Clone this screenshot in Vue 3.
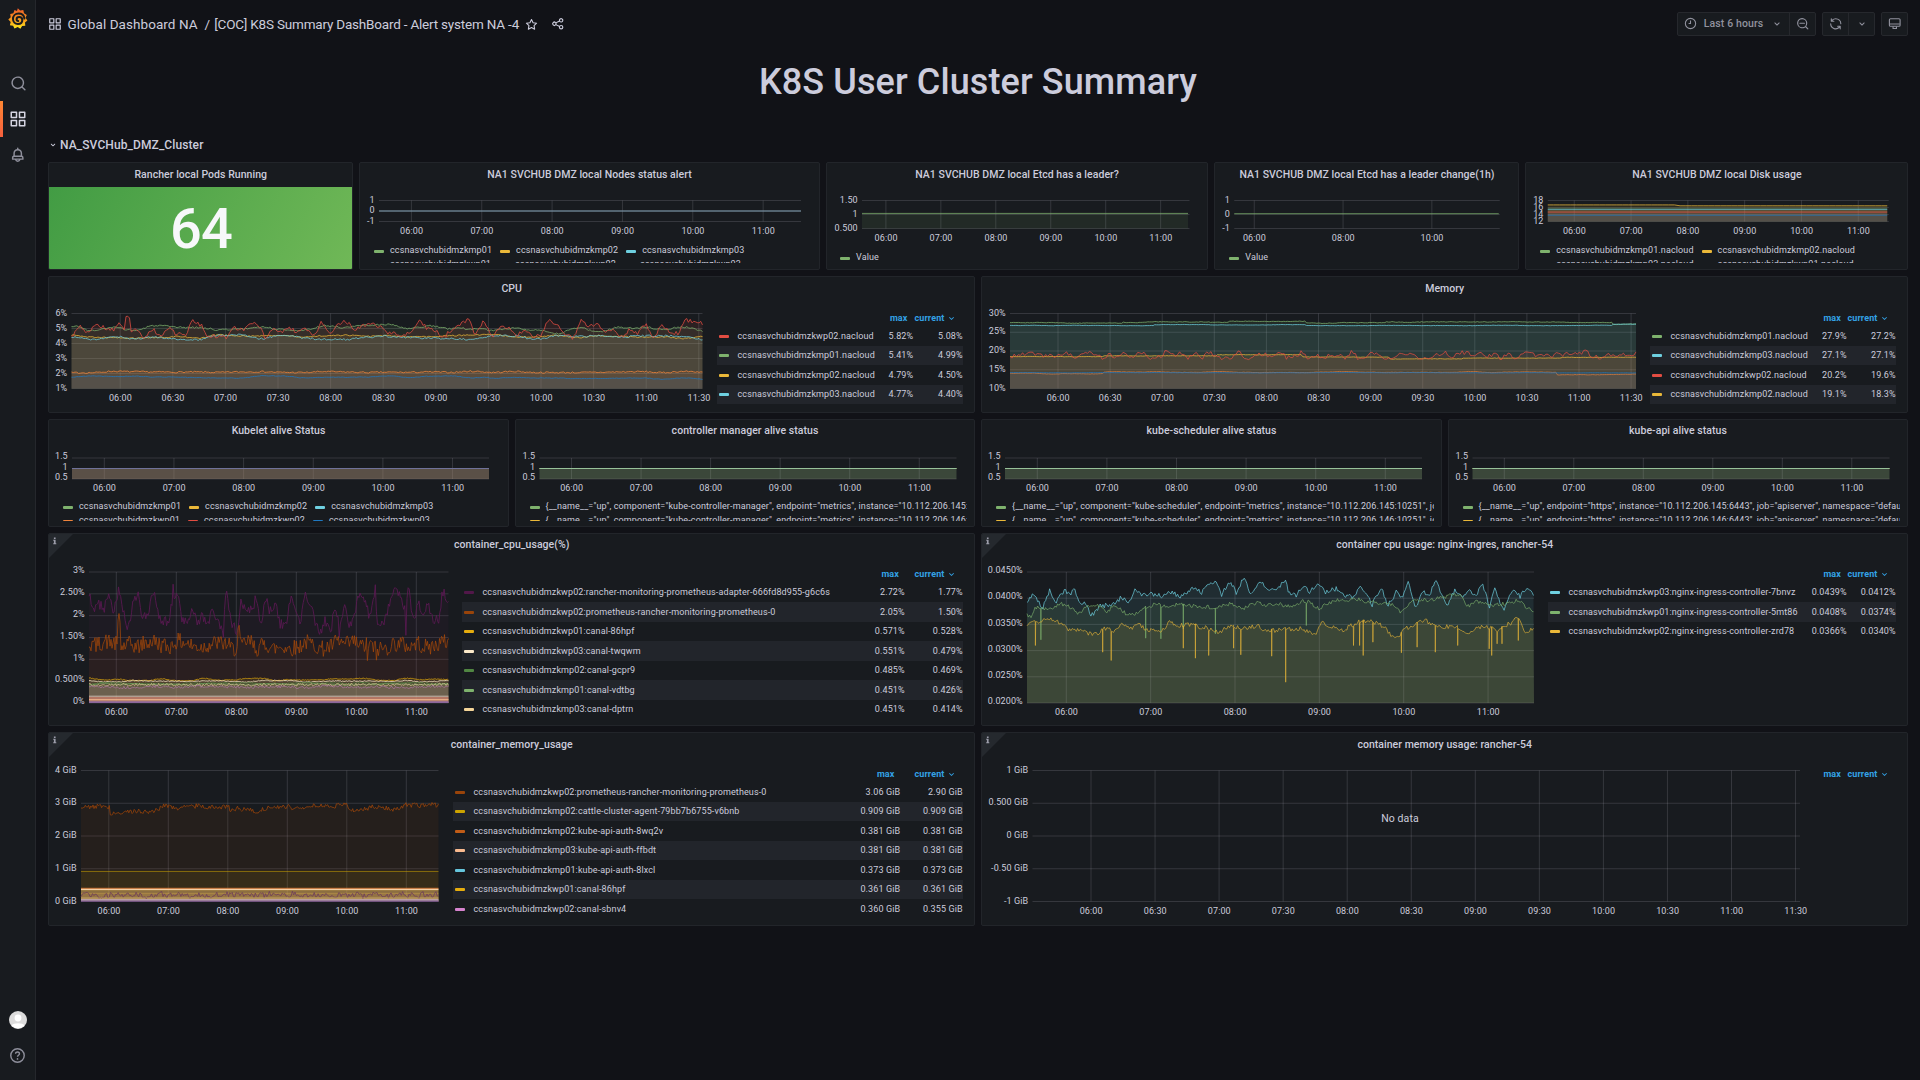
<script setup>
const GREEN = '#7EB26D', YELLOW = '#EAB839', CYAN = '#6ED0E0', ORANGE = '#EF843C', RED = '#E24D42', BLUE = '#1F78C1'

const icons = {
  apps: 'M10,13H3a1,1,0,0,0-1,1v7a1,1,0,0,0,1,1h7a1,1,0,0,0,1-1V14A1,1,0,0,0,10,13ZM9,20H4V15H9ZM21,2H14a1,1,0,0,0-1,1v7a1,1,0,0,0,1,1h7a1,1,0,0,0,1-1V3A1,1,0,0,0,21,2ZM20,9H15V4h5Zm1,4H14a1,1,0,0,0-1,1v7a1,1,0,0,0,1,1h7a1,1,0,0,0,1-1V14A1,1,0,0,0,21,13Zm-1,7H15V15h5ZM10,2H3A1,1,0,0,0,2,3v7a1,1,0,0,0,1,1h7a1,1,0,0,0,1-1V3A1,1,0,0,0,10,2ZM9,9H4V4H9Z',
  search: 'M21.71,20.29,18,16.61A9,9,0,1,0,16.61,18l3.68,3.68a1,1,0,0,0,1.42,0A1,1,0,0,0,21.71,20.29ZM11,18a7,7,0,1,1,7-7A7,7,0,0,1,11,18Z',
  minus: 'M21.71,20.29,18,16.61A9,9,0,1,0,16.61,18l3.68,3.68a1,1,0,0,0,1.42,0A1,1,0,0,0,21.71,20.29ZM11,18a7,7,0,1,1,7-7A7,7,0,0,1,11,18ZM15,10H7a1,1,0,0,0,0,2h8a1,1,0,0,0,0-2Z',
  bell: 'M18,13.18V10a6,6,0,0,0-5-5.91V3a1,1,0,0,0-2,0V4.09A6,6,0,0,0,6,10v3.18A3,3,0,0,0,4,16v2a1,1,0,0,0,1,1H8.14a4,4,0,0,0,7.72,0H19a1,1,0,0,0,1-1V16A3,3,0,0,0,18,13.18ZM8,10a4,4,0,0,1,8,0v3H8Zm4,10a2,2,0,0,1-1.72-1h3.44A2,2,0,0,1,12,20Zm6-3H6V16a1,1,0,0,1,1-1H17a1,1,0,0,1,1,1Z',
  down: 'M17,9.17a1,1,0,0,0-1.41,0L12,12.71,8.46,9.17a1,1,0,0,0-1.41,0,1,1,0,0,0,0,1.42l4.24,4.24a1,1,0,0,0,1.42,0L17,10.59A1,1,0,0,0,17,9.17Z',
  share: 'M18,14a4,4,0,0,0-3.08,1.48l-5.1-2.35a3.64,3.64,0,0,0,0-2.26l5.1-2.35A4,4,0,1,0,14,6a4.17,4.17,0,0,0,.07.71L8.79,9.14a4,4,0,1,0,0,5.72l5.28,2.43A4.17,4.17,0,0,0,14,18a4,4,0,1,0,4-4ZM18,4a2,2,0,1,1-2,2A2,2,0,0,1,18,4ZM6,14a2,2,0,1,1,2-2A2,2,0,0,1,6,14Zm12,6a2,2,0,1,1,2-2A2,2,0,0,1,18,20Z',
  sync: 'M19.91,15.51H15.38a1,1,0,0,0,0,2h2.4A8,8,0,0,1,4,12a1,1,0,0,0-2,0,10,10,0,0,0,16.88,7.23V21a1,1,0,0,0,2,0V16.5A1,1,0,0,0,19.91,15.51ZM12,2A10,10,0,0,0,5.12,4.77V3a1,1,0,0,0-2,0V7.5a1,1,0,0,0,1,1h4.5a1,1,0,0,0,0-2H6.22A8,8,0,0,1,20,12a1,1,0,0,0,2,0A10,10,0,0,0,12,2Z',
}

function rng(seed) {
  let a = seed
  return () => {
    a = (a + 0x6d2b79f5) | 0
    let t = Math.imul(a ^ (a >>> 15), 1 | a)
    t = (t + Math.imul(t ^ (t >>> 7), 61 | t)) ^ t
    return ((t ^ (t >>> 14)) >>> 0) / 4294967296
  }
}
// Smoothed noise around a base; spikes override single samples: { position 0..1: value }
function wave({ seed, n = 300, base, slow = 0, fast = 0, period = 12, spikes = {}, steps }) {
  const r = rng(seed)
  const knots = Array.from({ length: Math.ceil(n / period) + 3 }, () => r() * 2 - 1)
  const out = []
  for (let i = 0; i < n; i++) {
    const k = i / period
    const j = Math.floor(k)
    const f = (1 - Math.cos((k - j) * Math.PI)) / 2
    let b = base
    if (steps) for (const [at, v] of steps) if (i / n >= at) b = v
    out.push(b + slow * (knots[j] * (1 - f) + knots[j + 1] * f) + fast * (r() * 2 - 1))
  }
  for (const s in spikes) {
    const i = Math.round(Number(s) * (n - 1))
    out[i] = spikes[s]
  }
  return out
}
const flat = (v) => [v, v]

const f1 = (v) => v.toFixed(1)
function build(p) {
  const [x0, x1, y0, y1] = p.plot
  const [lo, hi] = p.range
  const end = p.end || x1
  const Y = (v) => y1 - ((v - lo) / (hi - lo)) * (y1 - y0)
  const series = p.series.map((s) => {
    const pts = s.page || s.v.map((v, i) => [x0 + ((end - x0) * i) / (s.v.length - 1), Y(v)])
    const d = 'M' + pts.map(([x, y]) => f1(x) + ' ' + f1(y)).join('L')
    return { c: s.c, o: s.o ?? 0.75, fo: s.fo ?? 0.1, w: s.w || 1, d, area: d + `L${f1(end)} ${y1}L${x0} ${y1}Z` }
  })
  const labels = p.y.map((t, i) => ({ t, y: y0 + ((y1 - y0) * i) / (p.y.length - 1) }))
  const ticks = p.x.map((t, i) => ({ t, x: p.tick[0] + p.tick[1] * i }))
  return { ...p, series, labels, ticks, half: p.box[1] % 1 !== 0, yr: p.yr ?? x0 - 4.2 }
}
const H6 = ['06:00', '07:00', '08:00', '09:00', '10:00', '11:00']
const H12 = ['06:00', '06:30', '07:00', '07:30', '08:00', '08:30', '09:00', '09:30', '10:00', '10:30', '11:00', '11:30']

// nginx traces, digitised as x,y pairs on a 1568-wide sheet
const toPage = ([x, y]) => [970 + x / 1.6505, 525 + y / 3]
function trace(seed, src, dips, jitter) {
  const r = rng(seed)
  const k = []
  for (let i = 0; i < src.length; i += 2) k.push([src[i], src[i + 1]])
  const out = []
  let j = 0
  for (let x = k[0][0]; x <= 931; x += 2.2) {
    while (j < k.length - 2 && k[j + 1][0] < x) j++
    const t = Math.min(1, (x - k[j][0]) / (k[j + 1][0] - k[j][0]))
    out.push([x, k[j][1] + (k[j + 1][1] - k[j][1]) * t + (r() * 2 - 1) * jitter])
  }
  for (let i = 0; i < dips.length; i += 2) {
    const at = out.findIndex(([x]) => x >= dips[i])
    if (at > 0) out.splice(at, 0, [dips[i] - 0.3, out[at][1]], [dips[i], dips[i + 1]], [dips[i] + 0.4, out[at][1]])
  }
  return out.map(toPage)
}
const nginxCyan = trace(5, [94,228,106,205,120,250,132,190,140,235,155,195,165,205,172,190,182,232,192,235,200,272,215,240,235,240,250,215,262,228,272,195,285,210,300,205,320,212,333,198,345,215,357,205,370,183,382,205,395,170,405,170,415,208,430,165,440,205,452,155,463,205,480,170,492,195,508,190,520,165,528,208,540,208,550,180,560,198,578,175,585,200,605,190,618,210,632,215,642,185,655,205,663,240,678,185,690,240,705,195,713,220,723,168,735,250,748,195,757,215,769,160,778,205,786,245,800,195,812,215,825,195,835,210,845,175,858,245,865,185,880,255,890,210,900,190,908,215,918,185,931,205], [], 7)
const nginxGreen = trace(9, [94,268,100,275,108,245,130,250,150,235,165,245,178,265,195,240,215,240,228,260,238,235,258,265,275,265,290,245,310,235,328,250,345,232,365,240,385,245,405,245,430,235,450,250,475,230,490,240,510,235,530,245,550,225,560,230,575,250,600,225,640,222,670,232,695,235,710,260,735,220,760,225,790,210,810,205,820,245,835,225,860,240,880,235,905,225,918,245,931,258], [117,343,290,338,315,340,352,310,405,325,555,300], 6)
const nginxYellow = trace(13, [94,300,110,290,130,280,145,290,160,310,185,318,205,328,222,310,240,315,250,290,268,310,275,295,290,310,313,320,330,290,345,300,365,298,385,305,410,320,430,300,455,310,475,300,490,318,520,310,545,310,570,330,580,292,595,300,610,318,640,290,660,285,680,300,702,340,718,310,750,285,775,305,800,300,820,328,845,300,870,315,895,290,906,275,915,320,931,310], [108,360,219,380,233,405,352,368,372,398,394,390,435,368,447,388,498,392,521,470,633,360,643,360,649,390,665,350,712,382,738,365,768,380,805,360,857,370,861,390,870,355,878,355,905,345], 7)

const alive = [{ c: GREEN, v: flat(1) }, { c: YELLOW, v: flat(1) }, { c: CYAN, v: flat(1), o: 0.55 }]
const kmp = (i) => 'ccsnasvchubidmzkmp0' + i
const kwp = (i) => 'ccsnasvchubidmzkwp0' + i

const panels = [
  { title: 'Rancher local Pods Running', col: 4, rows: 4, stat: '64' },
  build({
    title: 'NA1 SVCHUB DMZ local Nodes status alert', col: 6, rows: 4, box: [359, 162],
    plot: [379, 801, 200.5, 221.5], range: [-1, 1], y: ['1', '0', '-1'], x: H6, tick: [411.4, 70.35],
    series: [{ c: GREEN, v: flat(0), fo: 0, o: 0.4 }, { c: '#7288aa', v: flat(0), fo: 0, o: 0.65, w: 1.4 }],
    leg: { top: 81, left: 15, h: 19.4, rows: [[[GREEN, kmp(1)], [YELLOW, kmp(2)], [CYAN, kmp(3)]], [[ORANGE, kwp(1)], [RED, kwp(2)], [BLUE, kwp(3)]]] },
  }),
  build({
    title: 'NA1 SVCHUB DMZ local Etcd has a leader?', col: 5, rows: 4, box: [825.5, 162],
    plot: [861.5, 1189, 200.5, 228.5], end: 1187.5, range: [0.5, 1.5], y: ['1.50', '1', '0.500'], x: H6, tick: [885.4, 54.95],
    series: [{ c: GREEN, v: flat(1.04) }],
    leg: { top: 88, left: 14.5, h: 14, rows: [[[GREEN, 'Value']]] },
  }),
  build({
    title: 'NA1 SVCHUB DMZ local Etcd has a leader change(1h)', col: 4, rows: 4, box: [1214.25, 162],
    plot: [1234.5, 1500, 200.5, 228.5], end: 1499, range: [-1, 1], y: ['1', '0', '-1'], x: ['06:00', '08:00', '10:00'], tick: [1254.5, 88.8],
    series: [{ c: GREEN, v: flat(0.06), fo: 0 }],
    leg: { top: 88, left: 15, h: 14, rows: [[[GREEN, 'Value']]] },
  }),
  build({
    title: 'NA1 SVCHUB DMZ local Disk usage', col: 5, rows: 4, box: [1525.25, 162],
    plot: [1548, 1889, 200.5, 221.5], end: 1887.5, range: [12, 18], y: ['18', '16', '14', '12'], x: H6, tick: [1574.5, 56.8],
    series: [
      { c: YELLOW, v: wave({ seed: 1, n: 60, base: 16.75, steps: [[0.38, 16.5]] }) },
      { c: GREEN, v: flat(15.8), o: 0.3 }, { c: CYAN, v: flat(15.5) }, { c: ORANGE, v: flat(15), o: 0.3 }, { c: RED, v: flat(14.7) },
      { c: BLUE, v: flat(13.8) },
    ],
    leg: { top: 81, left: 15, h: 19.4, rows: [[[GREEN, kmp(1) + '.nacloud'], [YELLOW, kmp(2) + '.nacloud']], [[CYAN, kmp(3) + '.nacloud'], [ORANGE, kwp(1) + '.nacloud']]] },
  }),

  build({
    title: 'CPU', col: 12, rows: 5, box: [48, 276],
    plot: [71.5, 702.5, 313.5, 388.5], range: [1, 6], y: ['6%', '5%', '4%', '3%', '2%', '1%'], x: H12, tick: [120.2, 52.6],
    series: [
      { c: GREEN, v: wave({ seed: 3, n: 360, base: 5.08, slow: 0.24, fast: 0.06, steps: [[0.62, 4.88], [0.9, 5]] }) },
      { c: YELLOW, v: wave({ seed: 4, n: 360, base: 4.46, slow: 0.13, fast: 0.04 }) },
      { c: CYAN, v: wave({ seed: 6, n: 360, base: 4.42, slow: 0.16, fast: 0.06, steps: [[0.5, 4.36]] }) },
      { c: ORANGE, v: wave({ seed: 7, n: 360, base: 2.1, slow: 0.05, fast: 0.05 }), o: 0.8 },
      { c: RED, v: wave({ seed: 8, n: 360, base: 4.97, slow: 0.6, fast: 0.14, period: 4.6, spikes: { 0.086: 5.8, 0.089: 5.82, 0.092: 5.7 } }), o: 0.78 },
      { c: BLUE, v: wave({ seed: 10, n: 360, base: 1.77, slow: 0.08, fast: 0.02, steps: [[0.66, 1.7]] }) },
    ],
    side: { x: 718, w: 246, col: 49.5, items: [[RED, kwp(2) + '.nacloud', '5.82%', '5.08%'], [GREEN, kmp(1) + '.nacloud', '5.41%', '4.99%'], [YELLOW, kmp(2) + '.nacloud', '4.79%', '4.50%'], [CYAN, kmp(3) + '.nacloud', '4.77%', '4.40%']] },
  }),
  build({
    title: 'Memory', col: 12, rows: 5, box: [981, 276],
    plot: [1010, 1636, 313.5, 388.5], range: [10, 30], y: ['30%', '25%', '20%', '15%', '10%'], x: H12, tick: [1058, 52.1],
    series: [
      { c: GREEN, v: wave({ seed: 31, n: 360, base: 27.5, slow: 0.12, fast: 0.08, steps: [[0.18, 27.7], [0.35, 27.9], [0.47, 27.5], [0.6, 27.7], [0.96, 27.2]] }) },
      { c: CYAN, v: wave({ seed: 32, n: 360, base: 26.8, slow: 0.08, fast: 0.04, steps: [[0.23, 27], [0.47, 26.8], [0.96, 27.1]] }) },
      { c: YELLOW, v: wave({ seed: 33, n: 360, base: 18.5, slow: 0.04, fast: 0.05, steps: [[0.15, 18.7], [0.33, 19], [0.465, 18.4], [0.605, 17.9], [0.72, 18.1], [0.88, 18.3]] }) },
      { c: ORANGE, v: wave({ seed: 34, n: 360, base: 14, slow: 0.15, fast: 0.05, steps: [[0.15, 14.4], [0.87, 13.7]] }), o: 0.65 },
      { c: RED, v: wave({ seed: 35, n: 300, base: 18.9, slow: 0.9, fast: 0.6, period: 3.4 }), o: 0.75 },
      { c: BLUE, v: wave({ seed: 36, n: 360, base: 14.2, slow: 0.04, fast: 0.03 }) },
    ],
    side: { x: 1651, w: 246, col: 49, items: [[GREEN, kmp(1) + '.nacloud', '27.9%', '27.2%'], [CYAN, kmp(3) + '.nacloud', '27.1%', '27.1%'], [RED, kwp(2) + '.nacloud', '20.2%', '19.6%'], [YELLOW, kmp(2) + '.nacloud', '19.1%', '18.3%']] },
  }),

  build({
    title: 'Kubelet alive Status', col: 6, rows: 4, box: [48, 418.5],
    plot: [72, 489, 457.5, 478.5], range: [0.5, 1.5], y: ['1.5', '1', '0.5'], x: H6, tick: [104.3, 69.65],
    series: [...alive, { c: ORANGE, v: flat(1) }, { c: RED, v: flat(1) }, { c: '#4a78b5', v: flat(1) }],
    leg: { top: 80.5, left: 15, h: 20.5, rows: [[[GREEN, kmp(1)], [YELLOW, kmp(2)], [CYAN, kmp(3)]], [[ORANGE, kwp(1)], [RED, kwp(2)], [BLUE, kwp(3)]]] },
  }),
  build({
    title: 'controller manager alive status', col: 6, rows: 4, box: [514.5, 418.5],
    plot: [539, 956, 457.5, 478.5], range: [0.5, 1.5], y: ['1.5', '1', '0.5'], x: H6, tick: [571, 69.55],
    series: alive,
    leg: { top: 80.5, left: 15, h: 20.5, rows: [145, 146].map((n, i) => [[i ? YELLOW : GREEN, `{__name__="up", component="kube-controller-manager", endpoint="metrics", instance="10.112.206.${n}:10252", job="kube-controller-manager"}`]]) },
  }),
  build({
    title: 'kube-scheduler alive status', col: 6, rows: 4, box: [981, 418.5],
    plot: [1005, 1422, 457.5, 478.5], range: [0.5, 1.5], y: ['1.5', '1', '0.5'], x: H6, tick: [1037.3, 69.6],
    series: alive,
    leg: { top: 80.5, left: 15, h: 20.5, rows: [145, 146].map((n, i) => [[i ? YELLOW : GREEN, `{__name__="up", component="kube-scheduler", endpoint="metrics", instance="10.112.206.${n}:10251", job="kube-scheduler"}`]]) },
  }),
  build({
    title: 'kube-api alive status', col: 6, rows: 4, box: [1447.5, 418.5],
    plot: [1472, 1889, 457.5, 478.5], range: [0.5, 1.5], y: ['1.5', '1', '0.5'], x: H6, tick: [1503.8, 69.5],
    series: alive,
    leg: { top: 80.5, left: 15, h: 20.5, rows: [145, 146].map((n, i) => [[i ? YELLOW : GREEN, `{__name__="up", endpoint="https", instance="10.112.206.${n}:6443", job="apiserver", namespace="default"}`]]) },
  }),

  build({
    title: 'container_cpu_usage(%)', col: 12, rows: 7, box: [48, 532.5], info: true,
    plot: [89, 448.5, 571.5, 702.5], range: [0, 3], y: ['3%', '2.50%', '2%', '1.50%', '1%', '0.500%', '0%'], x: H6, tick: [116.3, 60],
    series: [
      { c: '#5c1a53', v: wave({ seed: 41, n: 330, base: 2.13, slow: 0.5, fast: 0.12, period: 4.5, spikes: { 0.375: 1.5, 0.695: 1.5, 0.88: 1.55, 0.795: 2.71, 0.235: 2.72 } }), o: 0.85, fo: 0.1 },
      { c: '#a84a0a', v: wave({ seed: 42, n: 360, base: 1.34, slow: 0.1, fast: 0.19, period: 8, spikes: { 0.08: 1.9, 0.083: 2.05, 0.086: 1.85, 0.415: 1.72, 0.418: 1.78, 0.775: 0.97, 0.8: 0.98 } }), o: 0.72, fo: 0.09 },
      { c: '#E5AC0E', v: wave({ seed: 43, n: 300, base: 0.54, slow: 0.03, fast: 0.01 }), o: 0.7 },
      { c: '#FCEACA', v: wave({ seed: 44, n: 300, base: 0.5, slow: 0.02, fast: 0.01 }), o: 0.75 },
      { c: '#508642', v: wave({ seed: 45, n: 300, base: 0.45, slow: 0.02, fast: 0.01 }) },
      { c: '#7EB26D', v: wave({ seed: 46, n: 300, base: 0.43, slow: 0.02, fast: 0.01 }), o: 0.6 },
      { c: '#F9D9A9', v: wave({ seed: 47, n: 300, base: 0.42, slow: 0.01, fast: 0.03 }), o: 0.55 },
      { c: '#c07ab8', v: wave({ seed: 48, n: 300, base: 0.37, slow: 0.02, fast: 0.03 }), o: 0.6 },
      { c: '#f0d9d0', v: flat(0.155), o: 0.7 },
      { c: '#e0806c', v: flat(0.12), fo: 0.45 },
      { c: '#F9BA8F', v: flat(0.08), fo: 0.3 },
      { c: '#7b5ca8', v: flat(0.02), w: 1.6 },
    ],
    side: { x: 463, w: 501, col: 58, items: [
      ['#511749', 'ccsnasvchubidmzkwp02:rancher-monitoring-prometheus-adapter-666fd8d955-g6c6s', '2.72%', '1.77%'],
      ['#99440A', 'ccsnasvchubidmzkwp02:prometheus-rancher-monitoring-prometheus-0', '2.05%', '1.50%'],
      ['#E5AC0E', 'ccsnasvchubidmzkwp01:canal-86hpf', '0.571%', '0.528%'],
      ['#FCEACA', 'ccsnasvchubidmzkwp03:canal-twqwm', '0.551%', '0.479%'],
      ['#508642', 'ccsnasvchubidmzkmp02:canal-gcpr9', '0.485%', '0.469%'],
      ['#7EB26D', 'ccsnasvchubidmzkmp01:canal-vdtbg', '0.451%', '0.426%'],
      ['#F4D598', 'ccsnasvchubidmzkmp03:canal-dptrn', '0.451%', '0.414%'],
    ] },
  }),
  build({
    title: 'container cpu usage: nginx-ingres, rancher-54', col: 12, rows: 7, box: [981, 532.5], info: true,
    plot: [1027, 1534, 571.5, 702.5], range: [0.02, 0.045], y: ['0.0450%', '0.0400%', '0.0350%', '0.0300%', '0.0250%', '0.0200%'], x: H6, tick: [1066.3, 84.35],
    series: [{ c: CYAN, page: nginxCyan, o: 0.7 }, { c: GREEN, page: nginxGreen, o: 0.65 }, { c: YELLOW, page: nginxYellow, o: 0.62 }],
    side: { x: 1549, w: 348, col: 49, items: [
      [CYAN, 'ccsnasvchubidmzkwp03:nginx-ingress-controller-7bnvz', '0.0439%', '0.0412%'],
      [GREEN, 'ccsnasvchubidmzkwp01:nginx-ingress-controller-5mt86', '0.0408%', '0.0374%'],
      [YELLOW, 'ccsnasvchubidmzkwp02:nginx-ingress-controller-zrd78', '0.0366%', '0.0340%'],
    ] },
  }),

  build({
    title: 'container_memory_usage', col: 12, rows: 7, box: [48, 732], info: true,
    plot: [81, 438.5, 770.5, 901.5], range: [0, 4], y: ['4 GiB', '3 GiB', '2 GiB', '1 GiB', '0 GiB'], x: H6, tick: [108.8, 59.5],
    series: [
      { c: '#99440A', v: wave({ seed: 51, n: 330, base: 2.93, slow: 0.06, fast: 0.07, period: 9, steps: [[0.08, 2.76], [0.22, 2.86], [0.32, 2.93], [0.415, 2.8], [0.52, 2.86], [0.62, 2.93], [0.745, 2.84], [0.9, 2.93]] }), o: 0.8 },
      { c: '#CCA300', v: flat(0.92), o: 0.6 },
      { c: '#E0752D', v: flat(0.4), fo: 0.12, w: 1.4 },
      { c: '#f6cfa8', v: flat(0.37), fo: 0.26, w: 1.4, o: 1 },
      { c: '#e8b850', v: flat(0.34), fo: 0.2, o: 0.3 },
      { c: '#e8b850', v: flat(0.25), fo: 0.12, o: 0.3 },
      { c: '#6e3c5c', v: wave({ seed: 55, n: 280, base: 0.2, slow: 0.05, fast: 0.08, period: 3 }), fo: 0.06, o: 0.8 },
      { c: '#f5d58a', v: flat(0.11), fo: 0.2, o: 0.4 },
      { c: '#c9b0e8', v: flat(0.05), fo: 0.3, w: 1.2 },
      { c: '#6a4a88', v: flat(0.01), w: 1.4 },
    ],
    side: { x: 454, w: 510, col: 62.5, items: [
      ['#99440A', 'ccsnasvchubidmzkwp02:prometheus-rancher-monitoring-prometheus-0', '3.06 GiB', '2.90 GiB'],
      ['#CCA300', 'ccsnasvchubidmzkmp02:cattle-cluster-agent-79bb7b6755-v6bnb', '0.909 GiB', '0.909 GiB'],
      ['#C15C17', 'ccsnasvchubidmzkmp02:kube-api-auth-8wq2v', '0.381 GiB', '0.381 GiB'],
      ['#F9BA8F', 'ccsnasvchubidmzkmp03:kube-api-auth-ffbdt', '0.381 GiB', '0.381 GiB'],
      ['#65C5DB', 'ccsnasvchubidmzkmp01:kube-api-auth-8lxcl', '0.373 GiB', '0.373 GiB'],
      ['#E5AC0E', 'ccsnasvchubidmzkwp01:canal-86hpf', '0.361 GiB', '0.361 GiB'],
      ['#D683CE', 'ccsnasvchubidmzkwp02:canal-sbnv4', '0.360 GiB', '0.355 GiB'],
    ], more: true },
  }),
  build({
    title: 'container memory usage: rancher-54', col: 12, rows: 7, box: [981, 732], info: true, empty: [1400, 818],
    plot: [1032.5, 1800, 770.5, 901.5], range: [-1, 1], y: ['1 GiB', '0.500 GiB', '0 GiB', '-0.50 GiB', '-1 GiB'], x: H12, tick: [1091, 64.05],
    series: [],
    side: { x: 1815, w: 82, col: 49, items: [] },
  }),
]
const HEAD = 24
for (const p of panels) {
  if (!p.box) continue
  const [bx, by] = p.box
  p.svgW = (p.side ? p.side.x : bx + p.col * 77.75 - 6) - bx - 2
  p.svgH = (p.leg ? p.leg.top : p.rows * 28.5 - 8) - HEAD
  p.vb = `${bx + 1} ${by + 1 + HEAD} ${p.svgW} ${p.svgH}`
}
</script>

<template>
  <div class="app">
    <nav class="rail">
      <svg class="logo" width="20" height="22" viewBox="0 0 20 22">
        <defs><linearGradient id="lg" x1="0" y1="1" x2="0" y2="0"><stop offset="0" stop-color="#FCEE1F" /><stop offset="0.35" stop-color="#F9A51A" /><stop offset="1" stop-color="#F15B2A" /></linearGradient></defs>
        <path fill="url(#lg)" d="M9.8 0.2 L12.2 2.6 L15.3 1.9 L16 5.2 L18.8 7 L17.5 9.7 L19.4 12.5 L17 14.6 L17.3 17.8 L14.1 18 L12.4 20.8 L9.7 19 L6.5 20.6 L5.1 17.8 L1.9 17.2 L2.7 14.1 L0.3 11.6 L2.7 9.3 L2.2 6.1 L5.4 5.3 L6.5 2.1 L9 3 Z" />
        <path fill="none" stroke="#181b1f" stroke-width="2" stroke-linecap="round" d="M16.4 10.6 C16 7.2 13.4 5.6 10.6 5.6 C7.2 5.6 5 8.2 5 11 C5 14 7.2 16 9.9 16 C12.6 16 14.3 14.2 14.3 12 C14.3 10 12.9 8.9 11.2 8.9 C9.6 8.9 8.6 9.9 8.6 11.2 C8.6 12.3 9.3 12.9 10.2 12.9" />
      </svg>
      <div class="item first"><svg width="17" height="17" viewBox="0 0 24 24"><path :d="icons.search" /></svg></div>
      <div class="item active"><svg width="18" height="18" viewBox="0 0 24 24"><path :d="icons.apps" /></svg></div>
      <div class="item"><svg width="17.5" height="17.5" viewBox="0 0 24 24"><path :d="icons.bell" /></svg></div>
      <div class="spacer"></div>
      <div class="avatar"><svg width="18" height="18" viewBox="0 0 18 18"><circle cx="9" cy="9" r="9" fill="#dcdcdc" /><circle cx="9" cy="7" r="3.4" fill="#fff" /><path fill="#fff" d="M2.6 14.6 C4 11.4 14 11.4 15.4 14.6 A9 9 0 0 1 2.6 14.6Z" /></svg></div>
      <div class="help"><svg width="17" height="17" viewBox="0 0 24 24"><circle cx="12" cy="12" r="9.5" class="ln" /><path class="ln" d="M9.3 9.5 C9.3 6.2 14.8 6.4 14.8 9.6 C14.8 11.6 12 11.7 12 13.6" /><circle cx="12" cy="16.8" r="1.2" /></svg></div>
    </nav>

    <main>
      <header class="bar">
        <svg class="ic" width="14" height="14" viewBox="0 0 24 24"><path :d="icons.apps" /></svg>
        <span class="crumb">Global Dashboard NA</span><span class="crumb sep">/</span><span class="crumb name">[COC] K8S Summary DashBoard - Alert system NA -4</span>
        <svg class="ic star" width="13" height="13" viewBox="0 0 24 24"><path class="ln" stroke-linejoin="round" d="M12 2.8 L14.9 8.7 L21.4 9.6 L16.7 14.2 L17.8 20.7 L12 17.6 L6.2 20.7 L7.3 14.2 L2.6 9.6 L9.1 8.7 Z" /></svg>
        <svg class="ic share" width="13.5" height="13.5" viewBox="0 0 24 24"><path :d="icons.share" /></svg>
        <div class="tools">
          <div class="group">
            <button class="time">
              <svg width="13" height="13" viewBox="0 0 24 24"><circle cx="12" cy="12" r="9.5" class="ln" /><path class="ln" d="M12 6.5 V12 H8.5" /></svg>
              <span>Last 6 hours</span>
              <svg width="12" height="12" viewBox="0 0 24 24"><path :d="icons.down" /></svg>
            </button>
            <button class="zoom"><svg width="13.5" height="13.5" viewBox="0 0 24 24"><path :d="icons.minus" /></svg></button>
          </div>
          <div class="group">
            <button class="zoom"><svg width="13.5" height="13.5" viewBox="0 0 24 24"><path :d="icons.sync" /></svg></button>
            <button class="pick"><svg width="12" height="12" viewBox="0 0 24 24"><path :d="icons.down" /></svg></button>
          </div>
          <div class="group">
            <button class="zoom"><svg width="13.5" height="13.5" viewBox="0 0 24 24"><rect class="ln" x="2.5" y="3" width="19" height="13.5" rx="2" /><path class="ln" d="M3 12.5 H21 M9 17 V20.5 H15 V17" /></svg></button>
          </div>
        </div>
      </header>

      <h1>K8S User Cluster Summary</h1>
      <div class="rowhead"><svg width="10" height="10" viewBox="0 0 24 24"><path :d="icons.down" /></svg>NA_SVCHub_DMZ_Cluster</div>

      <section class="grid">
        <article v-for="p in panels" :key="p.title" class="panel" :class="{ half: p.half }" :style="{ gridColumn: 'span ' + p.col, gridRow: 'span ' + p.rows }">
          <svg v-if="p.info" class="corner" width="24" height="24" viewBox="0 0 24 24"><path fill="#25292e" d="M0 0H24L0 24Z" /><path fill="#9d9eab" d="M4.9 3.4h1.7v1.5H4.9zM4.2 5.7h2.4v3.6h.7v1H4.2v-1h.7V6.7h-.7z" /></svg>
          <h2>{{ p.title }}</h2>
          <div v-if="p.stat" class="stat">{{ p.stat }}</div>
          <div v-else class="body" :class="{ row: p.side }">
            <svg class="chart" :width="p.svgW" :height="p.svgH" :viewBox="p.vb">
              <g class="gridlines">
                <path v-for="l in p.labels" :key="l.t" :d="`M${p.plot[0]} ${l.y}H${p.plot[1]}`" />
                <path v-for="t in p.ticks" :key="t.t" :d="`M${t.x} ${p.plot[2]}V${p.plot[3]}`" />
              </g>
              <template v-for="(s, i) in p.series" :key="i">
                <path :d="s.area" :fill="s.c" :fill-opacity="s.fo" />
              </template>
              <path v-for="(s, i) in p.series" :key="'l' + i" :d="s.d" fill="none" :stroke="s.c" :stroke-opacity="s.o" :stroke-width="s.w" stroke-linejoin="round" />
              <text v-for="l in p.labels" :key="'y' + l.t" class="axis" text-anchor="end" :x="p.yr" :y="l.y + (p.half ? 1.2 : 2)">{{ l.t }}</text>
              <text v-for="t in p.ticks" :key="'x' + t.t" class="axis" text-anchor="middle" :x="t.x + 0.2" :y="p.plot[3] + (p.half ? 11.9 : 12.6)">{{ t.t }}</text>
              <text v-if="p.empty" class="nodata" text-anchor="middle" :x="p.empty[0]" :y="p.empty[1] + 3.7">No data</text>
            </svg>
            <div v-if="p.leg" class="legend" :style="{ height: p.leg.h + 'px', marginLeft: p.leg.left - 1 + 'px' }">
              <div v-for="(r, i) in p.leg.rows" :key="i" class="lrow">
                <span v-for="it in r" :key="it[1]" class="litem"><i :style="{ background: it[0] }"></i>{{ it[1] }}</span>
              </div>
            </div>
            <div v-if="p.side" class="side" :style="{ width: p.side.w + 'px' }">
              <div class="shead"><span class="max">max</span><span class="cur" :style="{ width: p.side.col + 'px' }"><b>current</b><svg width="11" height="11" viewBox="0 0 24 24"><path :d="icons.down" /></svg></span></div>
              <div v-for="it in p.side.items" :key="it[1]" class="srow">
                <i :style="{ background: it[0] }"></i><span class="nm">{{ it[1] }}</span><span>{{ it[2] }}</span><span class="val" :style="{ width: p.side.col + 'px' }">{{ it[3] }}</span>
              </div>
              <div v-if="p.side.more" class="next"></div>
            </div>
          </div>
        </article>
      </section>
    </main>
  </div>
</template>

<style>
body { background: #111217; }
</style>

<style scoped>
* { box-sizing: border-box; }
.app { display: flex; width: 1920px; height: 1080px; overflow: hidden; background: #111217; color: #ccccdc; font-family: Roboto, sans-serif; font-size: 9px; letter-spacing: 0.115px; }
.app svg { fill: currentColor; display: block; flex: none; }
.app svg .ln { fill: none; stroke: currentColor; stroke-width: 2; }
.rail { width: 36px; flex: none; background: #181b1f; border-right: 1px solid #25272c; display: flex; flex-direction: column; align-items: center; color: #8e8f9b; }
.logo { margin-top: 8px; }
.item { width: 100%; height: 36px; display: flex; align-items: center; justify-content: center; padding-left: 1px; }
.item.first { margin-top: 35px; }
.item.active { color: #d5d5e2; border-left: 3px solid; border-image: linear-gradient(#ff8833, #f55f3e) 1; padding: 0 2px 0 0; }
.spacer { flex: 1; }
.avatar { margin-bottom: 18px; }
.help { margin-bottom: 16px; }
main { flex: 1; padding: 0 12px; }
.bar { display: flex; align-items: center; height: 48px; color: #ccccdc; }
.crumb { font-size: 13.5px; margin-left: 5.5px; white-space: pre; letter-spacing: 0.06px; }
.sep { margin-left: 7px; }
.name { margin-left: 4px; letter-spacing: -0.2px; }
.star { margin-left: 6px; }
.share { margin-left: 13px; }
.tools { margin-left: auto; display: flex; gap: 6px; height: 24px; margin-top: -1px; }
.group { display: flex; border: 1px solid #26282d; border-radius: 2px; background: #181b1f; }
button { all: unset; display: flex; align-items: center; justify-content: center; color: #91929e; box-sizing: border-box; }
.time { width: 111px; font-size: 10.5px; font-weight: 500; }
.time span { margin: 0 7.5px 0 6.5px; }
.zoom { width: 25px; }
.zoom + .pick, .time + .zoom { border-left: 1px solid #26282d; width: 26px; }
h1 { margin: 0; height: 68px; line-height: 69px; text-align: center; font-size: 36px; font-weight: 500; letter-spacing: 0.1px; }
.rowhead { display: flex; align-items: center; gap: 2px; height: 46px; padding: 11px 0 0; font-size: 12px; font-weight: 500; letter-spacing: 0.1px; }
.rowhead svg { margin-top: 1px; }
.grid { display: grid; grid-template-columns: repeat(24, 1fr); grid-auto-rows: 22.5px; gap: 6px; }
.panel { position: relative; min-width: 0; background: #181b1f; border: 1px solid #22252a; border-radius: 2px; display: flex; flex-direction: column; overflow: hidden; }
.corner { position: absolute; left: 0; top: 0; }
h2 { margin: 0; height: 24px; line-height: 23px; flex: none; text-align: center; font-size: 10.5px; font-weight: 500; letter-spacing: 0.04px; padding-left: 0.5px; }
.half h2 { line-height: 21.6px; }
.stat { flex: 1; display: flex; align-items: center; justify-content: center; background: linear-gradient(120deg, #429c44, #70b857); color: #f7f8fa; font-size: 56px; font-weight: 500; letter-spacing: -0.8px; padding: 2px 0 0 1px; }
.body { flex: 1; display: flex; flex-direction: column; min-height: 0; }
.body.row { flex-direction: row; }
.gridlines path { stroke: #ccccdc; stroke-opacity: 0.16; }
.axis { font-size: 9px; fill: #ccccdc; }
.nodata { font-size: 10.5px; fill: #ccccdc; }
.legend { overflow: hidden; margin-right: 7px; flex: none; }
.lrow { display: flex; height: 13.5px; line-height: 13.5px; white-space: nowrap; }
.litem { display: flex; align-items: center; flex: none; margin-right: 8px; }
.litem i, .srow i { width: 10px; height: 3px; border-radius: 1px; margin-right: 6px; flex: none; }
.litem i { margin-top: 2px; }
.side { flex: none; height: 162px; overflow: hidden; padding-top: 9px; }
.shead { display: flex; justify-content: flex-end; align-items: center; height: 16px; color: #33a2e5; padding-right: 0; }
.half .shead { padding-bottom: 1px; }
.max { font-weight: 700; padding-right: 6px; }
.cur { display: flex; justify-content: flex-end; align-items: center; }
.cur b { font-weight: 700; }
.cur svg { margin-left: 1px; margin-right: 6.5px; }
.srow { display: flex; align-items: center; height: 19.5px; padding: 0 0.3px 0 2px; white-space: nowrap; }
.srow i { margin: 1px 8.5px 0 0; }
.srow:nth-child(odd) { background: #22252b; }
.nm { flex: 1; }
.val { text-align: right; }
.next { height: 1px; background: #22252b; }
</style>
